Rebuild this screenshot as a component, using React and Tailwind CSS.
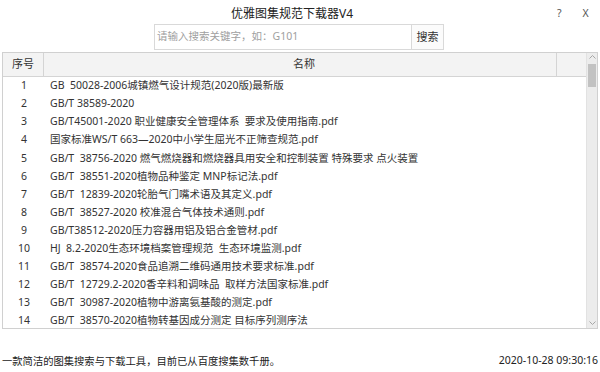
import React from "react";

const rows = [
  "GB  50028-2006城镇燃气设计规范(2020版)最新版",
  "GB/T 38589-2020",
  "GB/T45001-2020 职业健康安全管理体系  要求及使用指南.pdf",
  "国家标准WS/T 663—2020中小学生屈光不正筛查规范.pdf",
  "GB/T  38756-2020 燃气燃烧器和燃烧器具用安全和控制装置 特殊要求 点火装置",
  "GB/T  38551-2020植物品种鉴定 MNP标记法.pdf",
  "GB/T  12839-2020轮胎气门嘴术语及其定义.pdf",
  "GB/T  38527-2020 校准混合气体技术通则.pdf",
  "GB/T38512-2020压力容器用铝及铝合金管材.pdf",
  "HJ  8.2-2020生态环境档案管理规范  生态环境监测.pdf",
  "GB/T  38574-2020食品追溯二维码通用技术要求标准.pdf",
  "GB/T  12729.2-2020香辛料和调味品  取样方法国家标准.pdf",
  "GB/T  30987-2020植物中游离氨基酸的测定.pdf",
  "GB/T  38570-2020植物转基因成分测定 目标序列测序法",
];

export default function App() {
  return (
    <div
      className="w-[600px] h-[372px] bg-white text-[#333] flex flex-col overflow-hidden"
      style={{ fontFamily: '"Noto Sans", "Noto Sans CJK SC", sans-serif' }}
    >
      {/* title bar */}
      <div className="h-[24px] flex items-center shrink-0">
        <div className="w-[72px]" />
        <div className="flex-1 text-center text-[12px] leading-none text-[#222] pt-[4px]">
          优雅图集规范下载器V4
        </div>
        <div className="w-[88px] flex items-center text-[10.5px] text-[#555] pt-[4px]">
          <span className="ml-[45px]">?</span>
          <span className="ml-[21px]">X</span>
        </div>
      </div>

      {/* search row */}
      <div className="h-[26px] flex pl-[154px] shrink-0">
        <div className="w-[258px] h-full border border-[#d9d9d9] flex items-center px-[2px] text-[10.5px] text-[#a0a0a0]">
          请输入搜索关键字，如：G101
        </div>
        <div className="w-[32px] h-full border border-l-0 border-[#d9d9d9] bg-[#fbfbfb] flex items-center justify-center text-[11px] text-[#333]">
          搜索
        </div>
      </div>

      {/* table */}
      <div className="mt-[2px] mx-[2px] h-[277px] border border-[#d0d0d0] flex shrink-0">
        <div className="flex-1 flex flex-col min-w-0">
          <div className="h-[24px] flex bg-[#f3f3f3] border-b border-[#d4d4d4] text-[11px] shrink-0">
            <div className="w-[41px] border-r border-[#d4d4d4] flex items-center justify-center">序号</div>
            <div className="flex-1 border-r border-[#d4d4d4] flex items-center justify-center pl-[8px]">名称</div>
            <div className="w-[29px]" />
          </div>
          <div className="flex flex-col text-[10.5px]">
            {rows.map((r, i) => (
              <div key={i} className="h-[18.1px] flex items-center whitespace-pre">
                <div className="w-[42px] text-center">{i + 1}</div>
                <div className="pl-[5px]">{r}</div>
              </div>
            ))}
          </div>
        </div>
        {/* scrollbar */}
        <div className="w-[11px] bg-[#ececec] border-l border-[#e2e2e2] flex flex-col items-center shrink-0">
          <div className="h-[8px] w-full flex items-center justify-center">
            <svg width="7" height="4" viewBox="0 0 7 4">
              <path d="M0.5 3.5 L3.5 0.5 L6.5 3.5" fill="none" stroke="#a6a6a6" strokeWidth="1" />
            </svg>
          </div>
          <div className="mt-[3px] w-[8px] h-[23px] bg-[#c2c2c2]" />
          <div className="flex-1" />
          <div className="h-[8px] w-full flex items-center justify-center mb-[1px]">
            <svg width="7" height="4" viewBox="0 0 7 4">
              <path d="M0.5 0.5 L3.5 3.5 L6.5 0.5" fill="none" stroke="#a6a6a6" strokeWidth="1" />
            </svg>
          </div>
        </div>
      </div>

      {/* footer */}
      <div className="flex-1 flex items-end justify-between px-[2px] pb-[3px] text-[#222]">
        <span className="text-[10.3px]">一款简洁的图集搜索与下载工具，目前已从百度搜集数千册。</span>
        <span className="text-[10.5px]">2020-10-28 09:30:16</span>
      </div>
    </div>
  );
}
